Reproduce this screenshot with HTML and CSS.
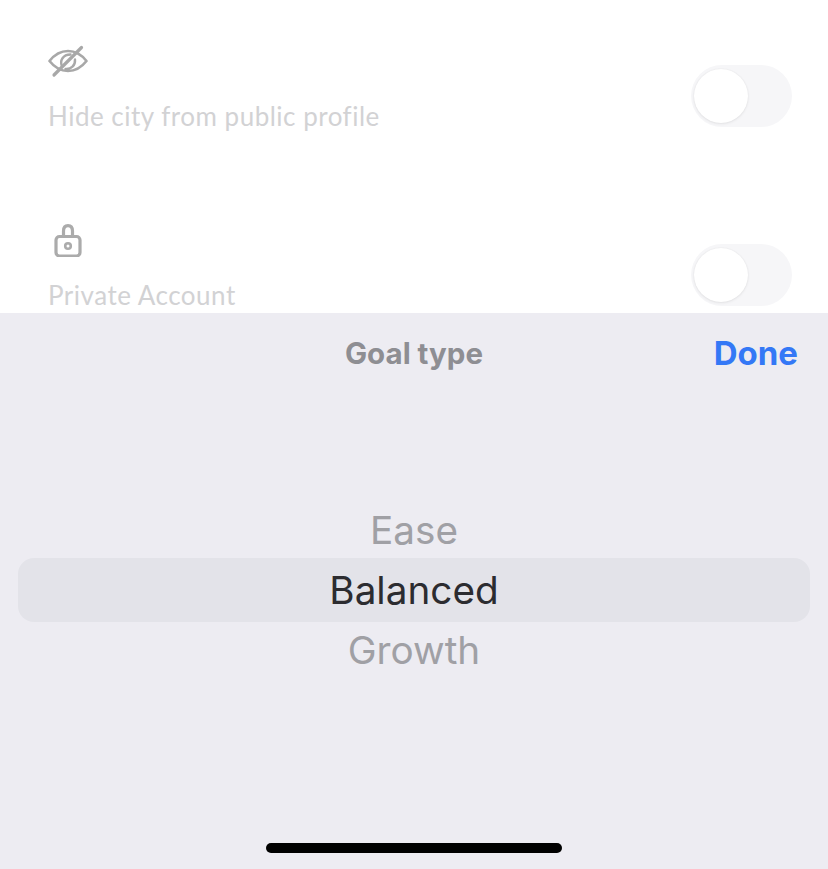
FILE: index.html
```html
<!DOCTYPE html>
<html lang="en">
<head>
<meta charset="utf-8">
<title>Goal type</title>
<link rel="stylesheet" href="styles.css">
</head>
<body>
<div class="page">
  <section class="settings">
    <div class="row">
      <div class="row-text">
        <svg class="icon" width="40" height="34" viewBox="0 0 40 34" fill="none" stroke="#a8a8a8" stroke-width="3.2" stroke-linecap="round" stroke-linejoin="round">
          <path d="M1.5 17 C7 10 13 7 20 7 C27 7 33 10 38.5 17 C33 24 27 27 20 27 C13 27 7 24 1.5 17 Z" stroke-width="2.6"/>
          <path d="M14 22.5 C11.5 16.5 15 10.5 22.5 10.5" stroke-width="2.4"/>
          <path d="M17.5 25 C23 25.5 27.5 21.5 27 15.5" stroke-width="2.4"/>
          <path d="M6 31 L33.5 3.5"/>
        </svg>
        <span class="label">Hide city from public profile</span>
      </div>
      <div class="toggle"><div class="knob"></div></div>
    </div>
    <div class="row">
      <div class="row-text">
        <svg class="icon" width="40" height="34" viewBox="0 0 40 34" fill="none" stroke="#ababab" stroke-width="3.2" stroke-linecap="round" stroke-linejoin="round">
          <rect x="8" y="13.5" width="24" height="19.5" rx="3.5"/>
          <path d="M15.5 13 V8 C15.5 4.5 17.2 2.6 20 2.6 C22.8 2.6 24.5 4.5 24.5 8 V13"/>
          <circle cx="20" cy="23" r="2.8" stroke-width="2.6"/>
        </svg>
        <span class="label">Private Account</span>
      </div>
      <div class="toggle"><div class="knob"></div></div>
    </div>
  </section>
  <section class="sheet">
    <header class="sheet-head">
      <h2 class="sheet-title">Goal type</h2>
      <span class="done">Done</span>
    </header>
    <div class="picker">
      <div class="option">Ease</div>
      <div class="option selected">Balanced</div>
      <div class="option">Growth</div>
    </div>
    <div class="home-bar"></div>
  </section>
</div>
</body>
</html>
```
FILE: styles.css
```css
* { box-sizing: border-box; }
html, body { margin: 0; padding: 0; }
body { background: #fff; font-family: "Inter", "Liberation Sans", sans-serif; }
.page { width: 828px; height: 869px; display: flex; flex-direction: column; overflow: hidden; }

.settings { height: 313px; padding: 44px 36px 0 48px; overflow: hidden; display: flex; flex-direction: column; gap: 76px; flex: none; }
.row { height: 103px; display: flex; align-items: flex-start; justify-content: space-between; flex: none; }
.row-text { display: flex; flex-direction: column; align-items: flex-start; gap: 22px; }
.icon { display: block; flex: none; }
.label { font-family: "Lato", sans-serif; font-size: 26px; line-height: 32px; color: #d2d2d4; letter-spacing: 0.5px; }
.toggle { width: 101px; height: 62px; margin-top: 21px; border-radius: 31px; background: #f6f6f8; padding: 4px 3px; }
.knob { width: 54px; height: 54px; border-radius: 50%; background: #fff; box-shadow: 0 1px 3px rgba(0,0,0,0.07), 0 0 2px rgba(0,0,0,0.06); }

.sheet { height: 556px; background: #edecf2; display: flex; flex-direction: column; flex: none; }
.sheet-head { height: 80px; display: flex; align-items: center; justify-content: center; position: relative; flex: none; }
.sheet-title { margin: 0; font-size: 29.5px; font-weight: 700; color: #8e8e93; }
.done { position: absolute; right: 30px; top: 20px; font-size: 33px; line-height: 40px; font-weight: 700; color: #3478f6; }

.picker { padding-top: 107px; display: flex; flex-direction: column; flex: none; }
.option { height: 60px; display: flex; align-items: center; justify-content: center; font-size: 38.7px; color: #a0a0a5; }
.option.selected { height: 64px; margin: -2px 18px; border-radius: 16px; background: #e3e3e9; color: #2c2c30; }

.home-bar { width: 296px; height: 10px; margin: auto auto 16px; border-radius: 5px; background: #000; flex: none; }
```
